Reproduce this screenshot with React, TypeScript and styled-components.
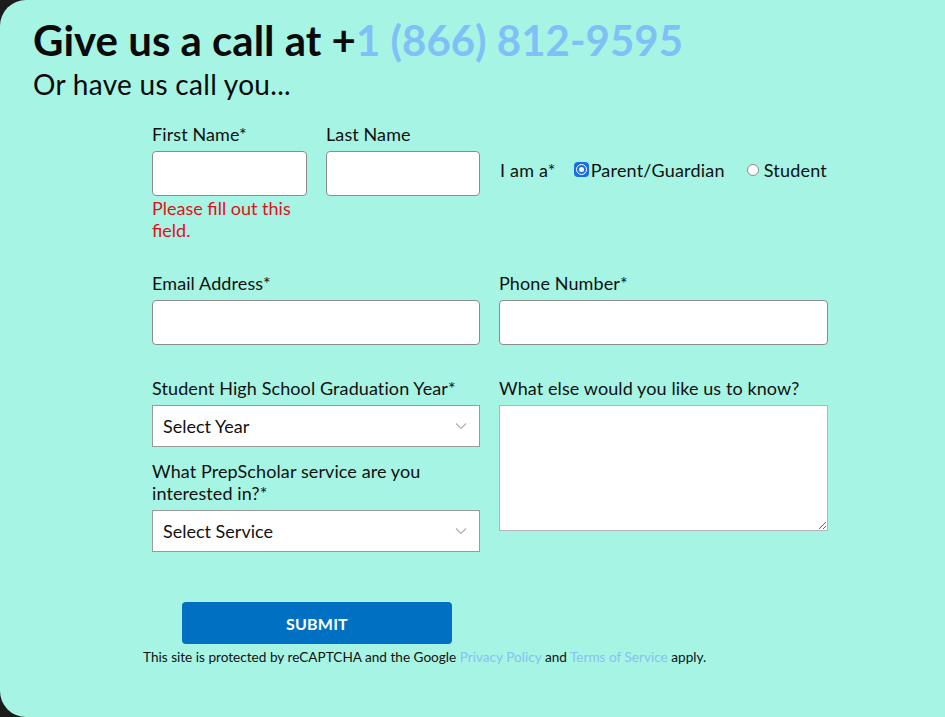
import React from "react";
import styled, { createGlobalStyle } from "styled-components";

const Global = createGlobalStyle`
  html, body { margin: 0; padding: 0; background: #1c1c1c; }
  body { font-family: "Lato", "Noto Sans", sans-serif; color: #111; }
  * { box-sizing: border-box; }
`;

const Panel = styled.div`
  width: 945px;
  height: 717px;
  background: #a6f4e3;
  border-radius: 26px 0 0 26px;
  padding: 16px 0 0 33px;
  overflow: hidden;
`;

const Title = styled.h1`
  margin: 0;
  font-size: 42px;
  font-weight: 700;
  line-height: 48px;
  letter-spacing: 0px;
  color: #0a0a0a;
`;

const Phone = styled.span`
  color: #80c0f6;
`;

const Subtitle = styled.h2`
  margin: 4px 0 0;
  font-size: 28px;
  font-weight: 400;
  line-height: 32px;
  letter-spacing: 0.3px;
  color: #0a0a0a;
`;

const Form = styled.form`
  margin: 23px 0 0 119px;
  width: 676px;
  display: flex;
  flex-direction: column;
`;

const Row = styled.div<{ $mt?: number }>`
  display: grid;
  grid-template-columns: 155px 154px 329px;
  column-gap: 19px;
  margin-top: ${(p) => p.$mt ?? 0}px;
`;

const TwoCol = styled.div<{ $mt?: number }>`
  display: grid;
  grid-template-columns: 328px 329px;
  column-gap: 19px;
  margin-top: ${(p) => p.$mt ?? 0}px;
`;

const Field = styled.div`
  display: flex;
  flex-direction: column;
`;

const Label = styled.label<{ $mt?: number }>`
  font-size: 18px;
  line-height: 22px;
  letter-spacing: 0.1px;
  margin-top: ${(p) => p.$mt ?? 0}px;
  margin-bottom: 6px;
  color: #111;
`;

const TextInput = styled.input`
  height: 45px;
  width: 100%;
  border: 1px solid #8c8c8c;
  border-radius: 4px;
  background: #fff;
  font: inherit;
  padding: 0 10px;
`;

const ErrorText = styled.div`
  color: #e0101a;
  font-size: 18px;
  line-height: 22px;
  margin-top: 1px;
`;

const RadioRow = styled.div`
  display: flex;
  align-items: center;
  height: 45px;
  margin-top: 24px;
  font-size: 18px;
  letter-spacing: 0.2px;
  color: #111;
  white-space: nowrap;
`;

const RadioLabel = styled.span`
  flex-shrink: 0;
  margin-left: 1px;
  margin-right: 18px;
`;

const RadioOption = styled.span`
  flex-shrink: 0;
  display: inline-flex;
  align-items: center;
  margin-right: 22px;
`;

const RadioDot = styled.span<{ $on?: boolean }>`
  display: inline-flex;
  align-items: center;
  justify-content: center;
  width: ${(p) => (p.$on ? 15 : 12)}px;
  height: ${(p) => (p.$on ? 15 : 12)}px;
  margin-right: ${(p) => (p.$on ? 2 : 5)}px;
  border-radius: ${(p) => (p.$on ? "4px" : "50%")};
  background: ${(p) => (p.$on ? "#1a6fe0" : "#fff")};
  border: ${(p) => (p.$on ? "none" : "1px solid #8a8a8a")};
`;

const RadioInner = styled.span`
  width: 11px;
  height: 11px;
  border-radius: 50%;
  border: 1.5px solid #fff;
  display: flex;
  align-items: center;
  justify-content: center;
  &::after {
    content: "";
    width: 5px;
    height: 5px;
    border-radius: 50%;
    background: #fff;
  }
`;

const SelectBox = styled.div`
  position: relative;
  height: 42px;
  border: 1px solid #9a9a9a;
  background: #fff;
  display: flex;
  align-items: center;
  padding: 0 10px;
  font-size: 18px;
  color: #111;
`;

const Chevron = styled.svg`
  position: absolute;
  right: 12px;
  top: 16px;
`;

const TextArea = styled.textarea`
  width: 329px;
  height: 126px;
  border: 1px solid #b5b5b5;
  background: #fff;
  font: inherit;
  resize: both;
`;

const Actions = styled.div`
  margin-top: 50px;
  display: flex;
  flex-direction: column;
  align-items: flex-start;
`;

const Submit = styled.button`
  margin-left: 30px;
  width: 270px;
  height: 42px;
  border: none;
  border-radius: 4px;
  background: #0071c2;
  color: #fff;
  font-family: inherit;
  font-weight: 700;
  font-size: 16px;
  letter-spacing: 0.2px;
`;

const Recaptcha = styled.p`
  margin: 4px 0 0 -9px;
  font-size: 13.6px;
  line-height: 18px;
  color: #111;
`;

const Link = styled.a`
  color: #86c2f2;
  text-decoration: none;
`;

const ChevronIcon = () => (
  <Chevron width="12" height="8" viewBox="0 0 12 8">
    <path d="M1 1.5 L6 6.5 L11 1.5" fill="none" stroke="#b0b0b0" strokeWidth="1.2" />
  </Chevron>
);

export default function App() {
  return (
    <>
      <Global />
      <Panel>
        <Title>
          Give us a call at +<Phone>1 (866) 812-9595</Phone>
        </Title>
        <Subtitle>Or have us call you...</Subtitle>
        <Form onSubmit={(e) => e.preventDefault()}>
          <Row>
            <Field>
              <Label>First Name*</Label>
              <TextInput />
              <ErrorText>Please fill out this field.</ErrorText>
            </Field>
            <Field>
              <Label>Last Name</Label>
              <TextInput />
            </Field>
            <RadioRow>
              <RadioLabel>I am a*</RadioLabel>
              <RadioOption>
                <RadioDot $on>
                  <RadioInner />
                </RadioDot>
                Parent/Guardian
              </RadioOption>
              <RadioOption>
                <RadioDot />
                Student
              </RadioOption>
            </RadioRow>
          </Row>
          <TwoCol $mt={31}>
            <Field>
              <Label>Email Address*</Label>
              <TextInput />
            </Field>
            <Field>
              <Label>Phone Number*</Label>
              <TextInput />
            </Field>
          </TwoCol>
          <TwoCol $mt={32}>
            <Field>
              <Label>Student High School Graduation Year*</Label>
              <SelectBox>
                Select Year
                <ChevronIcon />
              </SelectBox>
              <Label $mt={13}>
                What PrepScholar service are you interested in?*
              </Label>
              <SelectBox>
                Select Service
                <ChevronIcon />
              </SelectBox>
            </Field>
            <Field>
              <Label>What else would you like us to know?</Label>
              <TextArea />
            </Field>
          </TwoCol>
          <Actions>
            <Submit type="submit">SUBMIT</Submit>
            <Recaptcha>
              This site is protected by reCAPTCHA and the Google{" "}
              <Link href="#">Privacy Policy</Link> and{" "}
              <Link href="#">Terms of Service</Link> apply.
            </Recaptcha>
          </Actions>
        </Form>
      </Panel>
    </>
  );
}
